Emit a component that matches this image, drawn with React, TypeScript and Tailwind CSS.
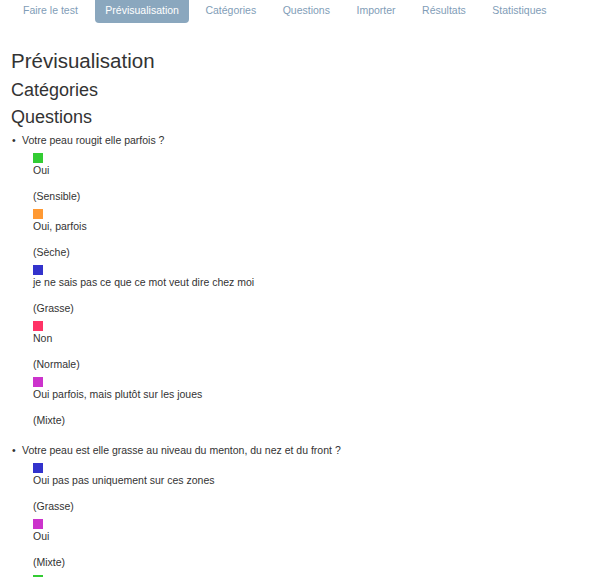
import React from 'react';

const TABS = ['Faire le test', 'Prévisualisation', 'Catégories', 'Questions', 'Importer', 'Résultats', 'Statistiques'];

const QUESTIONS = [
    {
        label: 'Votre peau rougit elle parfois ?',
        answers: [
            { color: '#33cc33', text: 'Oui', cat: 'Sensible' },
            { color: '#ff9933', text: 'Oui, parfois', cat: 'Sèche' },
            { color: '#3333cc', text: 'je ne sais pas ce que ce mot veut dire chez moi', cat: 'Grasse' },
            { color: '#ff3366', text: 'Non', cat: 'Normale' },
            { color: '#cc33cc', text: 'Oui parfois, mais plutôt sur les joues', cat: 'Mixte' },
        ],
    },
    {
        label: 'Votre peau est elle grasse au niveau du menton, du nez et du front ?',
        answers: [
            { color: '#3333cc', text: 'Oui pas pas uniquement sur ces zones', cat: 'Grasse' },
            { color: '#cc33cc', text: 'Oui', cat: 'Mixte' },
            { color: '#33cc33', text: 'Non', cat: 'Normale' },
        ],
    },
];

export default function App() {
    return (
        <div className="w-[600px] h-[577px] overflow-hidden bg-white text-[#333] font-['Liberation_Sans',Arial,sans-serif]">
            {/* Nav */}
            <ul className="flex gap-[6.5px] pl-[13px] h-[23px]">
                {TABS.map((t, i) => (
                    <li
                        key={t}
                        className={
                            i === 1
                                ? 'px-[10px] h-[23px] leading-[20px] text-[10.5px] rounded-b-[4px] bg-[#8aa7be] text-white ml-[1px]'
                                : 'px-[10px] h-[23px] leading-[20px] text-[10.5px] text-[#7f9db7]'
                        }
                    >
                        {t}
                    </li>
                ))}
            </ul>

            <div className="px-[11px]">
                <h1 className="text-[20.5px] leading-[24px] mt-[26px]">Prévisualisation</h1>
                <h2 className="text-[18px] leading-[22px] mt-[6px]">Catégories</h2>
                <h2 className="text-[18px] leading-[22px] mt-[5px]">Questions</h2>

                <ul className="mt-[5px] text-[10.5px]">
                    {QUESTIONS.map((q, qi) => (
                        <li key={qi} className={qi > 0 ? 'mt-[16px]' : ''}>
                            <div className="flex leading-[14px]">
                                <span className="w-[11px] pl-[1px]">•</span>
                                <span>{q.label}</span>
                            </div>
                            <div className="pl-[22px] mt-[6px]">
                                {q.answers.map((a, ai) => (
                                    <div key={ai}>
                                        <div className="w-[10px] h-[10px]" style={{ backgroundColor: a.color }} />
                                        <div className="leading-[14px]">{a.text}</div>
                                        <p className="leading-[14px] mt-[12px] mb-[6px]">({a.cat})</p>
                                    </div>
                                ))}
                            </div>
                        </li>
                    ))}
                </ul>
            </div>
        </div>
    );
}
